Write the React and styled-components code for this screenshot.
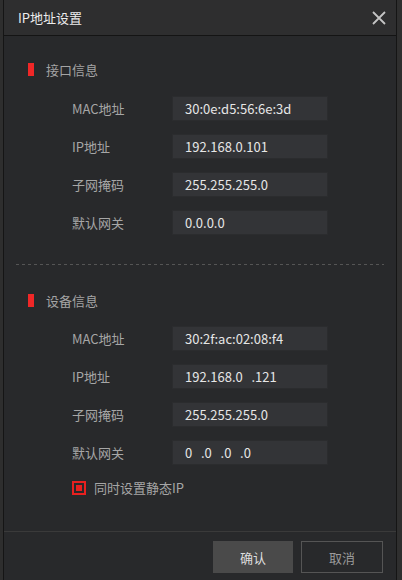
import React from "react";
import styled, { createGlobalStyle } from "styled-components";

const GlobalStyle = createGlobalStyle`
  body {
    margin: 0;
    background: #2e2e2e;
    font-family: "Noto Sans CJK SC", "Noto Sans", sans-serif;
  }
`;

const sections = [
  {
    title: "接口信息",
    rows: [
      ["MAC地址", "30:0e:d5:56:6e:3d"],
      ["IP地址", "192.168.0.101"],
      ["子网掩码", "255.255.255.0"],
      ["默认网关", "0.0.0.0"],
    ],
  },
  {
    title: "设备信息",
    rows: [
      ["MAC地址", "30:2f:ac:02:08:f4"],
      ["IP地址", "192.168.0   .121"],
      ["子网掩码", "255.255.255.0"],
      ["默认网关", "0   .0   .0   .0"],
    ],
  },
];

function App() {
  return (
    <>
      <GlobalStyle />
      <Page>
        <Dialog>
          <Header>
            <Title>IP地址设置</Title>
            <Close>
              <svg width="14" height="14" viewBox="0 0 14 14">
                <path d="M1 1 L13 13 M13 1 L1 13" stroke="#c4c4c4" strokeWidth="1.8" />
              </svg>
            </Close>
          </Header>

          <Body>
            <Section>
              <SectionTitle>{sections[0].title}</SectionTitle>
              <Rows $top={20}>
                {sections[0].rows.map(([label, value]) => (
                  <Row key={label}>
                    <Label>{label}</Label>
                    <Field>{value}</Field>
                  </Row>
                ))}
              </Rows>
            </Section>

            <Divider />

            <Section $top={28}>
              <SectionTitle>{sections[1].title}</SectionTitle>
              <Rows $top={19}>
                {sections[1].rows.map(([label, value]) => (
                  <Row key={label}>
                    <Label>{label}</Label>
                    <Field>{value}</Field>
                  </Row>
                ))}
              </Rows>
              <Check>
                <Box>
                  <Dot />
                </Box>
                同时设置静态IP
              </Check>
            </Section>
          </Body>

          <Footer>
            <Button $primary>确认</Button>
            <Button>取消</Button>
          </Footer>
        </Dialog>
        <Track />
      </Page>
    </>
  );
}

export default App;

const Page = styled.div`
  display: flex;
  height: 580px;
  padding-left: 3px;
`;

const Dialog = styled.div`
  width: 392px;
  height: 580px;
  display: flex;
  flex-direction: column;
  background: #28292b;
  border-left: 1px solid #151515;
  border-right: 1px solid #151515;
`;

const Track = styled.div`
  flex: 1;
  background: #2f2f2f;
`;

const Header = styled.div`
  height: 35px;
  display: flex;
  align-items: center;
  justify-content: space-between;
  padding: 0 10px 0 14px;
  background: #2e2e2f;
  border-bottom: 1px solid #141414;
`;

const Title = styled.div`
  color: #ececec;
  font-size: 13px;
`;

const Close = styled.div`
  display: flex;
  margin-top: 1px;
`;

const Body = styled.div`
  flex: 1;
  display: flex;
  flex-direction: column;
  padding-top: 26px;
`;

const Section = styled.div`
  display: flex;
  flex-direction: column;
  margin-top: ${(p) => p.$top || 0}px;
`;

const SectionTitle = styled.div`
  display: flex;
  align-items: center;
  gap: 12px;
  height: 14px;
  padding-left: 24px;
  color: #a4a4a4;
  font-size: 13px;

  &::before {
    content: "";
    width: 6px;
    height: 13px;
    background: #f02727;
  }
`;

const Rows = styled.div`
  display: flex;
  flex-direction: column;
  gap: 13px;
  margin-top: ${(p) => p.$top}px;
`;

const Row = styled.div`
  display: flex;
  align-items: center;
  padding-left: 68px;
`;

const Label = styled.div`
  width: 100px;
  color: #a6a6a6;
  font-size: 13px;
`;

const Field = styled.div`
  width: 142px;
  height: 23px;
  display: flex;
  align-items: center;
  padding-left: 12px;
  background: #333437;
  border: 1px solid #2b2c2e;
  color: #e6e6e6;
  font-size: 13px;
  white-space: pre;
`;

const Divider = styled.div`
  height: 1px;
  margin: 29px 12px 0 12px;
  background: repeating-linear-gradient(
    to right,
    #555 0 3px,
    transparent 3px 6px
  );
`;

const Check = styled.div`
  display: flex;
  align-items: center;
  gap: 8px;
  margin-top: 13px;
  padding-left: 68px;
  color: #a6a6a6;
  font-size: 13px;
`;

const Box = styled.div`
  width: 10px;
  height: 10px;
  border: 2px solid #e8201f;
  display: flex;
  align-items: center;
  justify-content: center;
`;

const Dot = styled.div`
  width: 6px;
  height: 6px;
  background: #e8201f;
`;

const Footer = styled.div`
  display: flex;
  justify-content: flex-end;
  gap: 8px;
  padding: 9px 13px 7px 0;
  border-top: 1px solid #3a3a3a;
`;

const Button = styled.div`
  box-sizing: border-box;
  width: ${(p) => (p.$primary ? 80 : 82)}px;
  height: 32px;
  display: flex;
  align-items: center;
  justify-content: center;
  font-size: 13px;
  color: ${(p) => (p.$primary ? "#dedede" : "#9a9a9a")};
  background: ${(p) => (p.$primary ? "#4a4a4a" : "transparent")};
  border: ${(p) => (p.$primary ? "none" : "1px solid #555")};
`;
